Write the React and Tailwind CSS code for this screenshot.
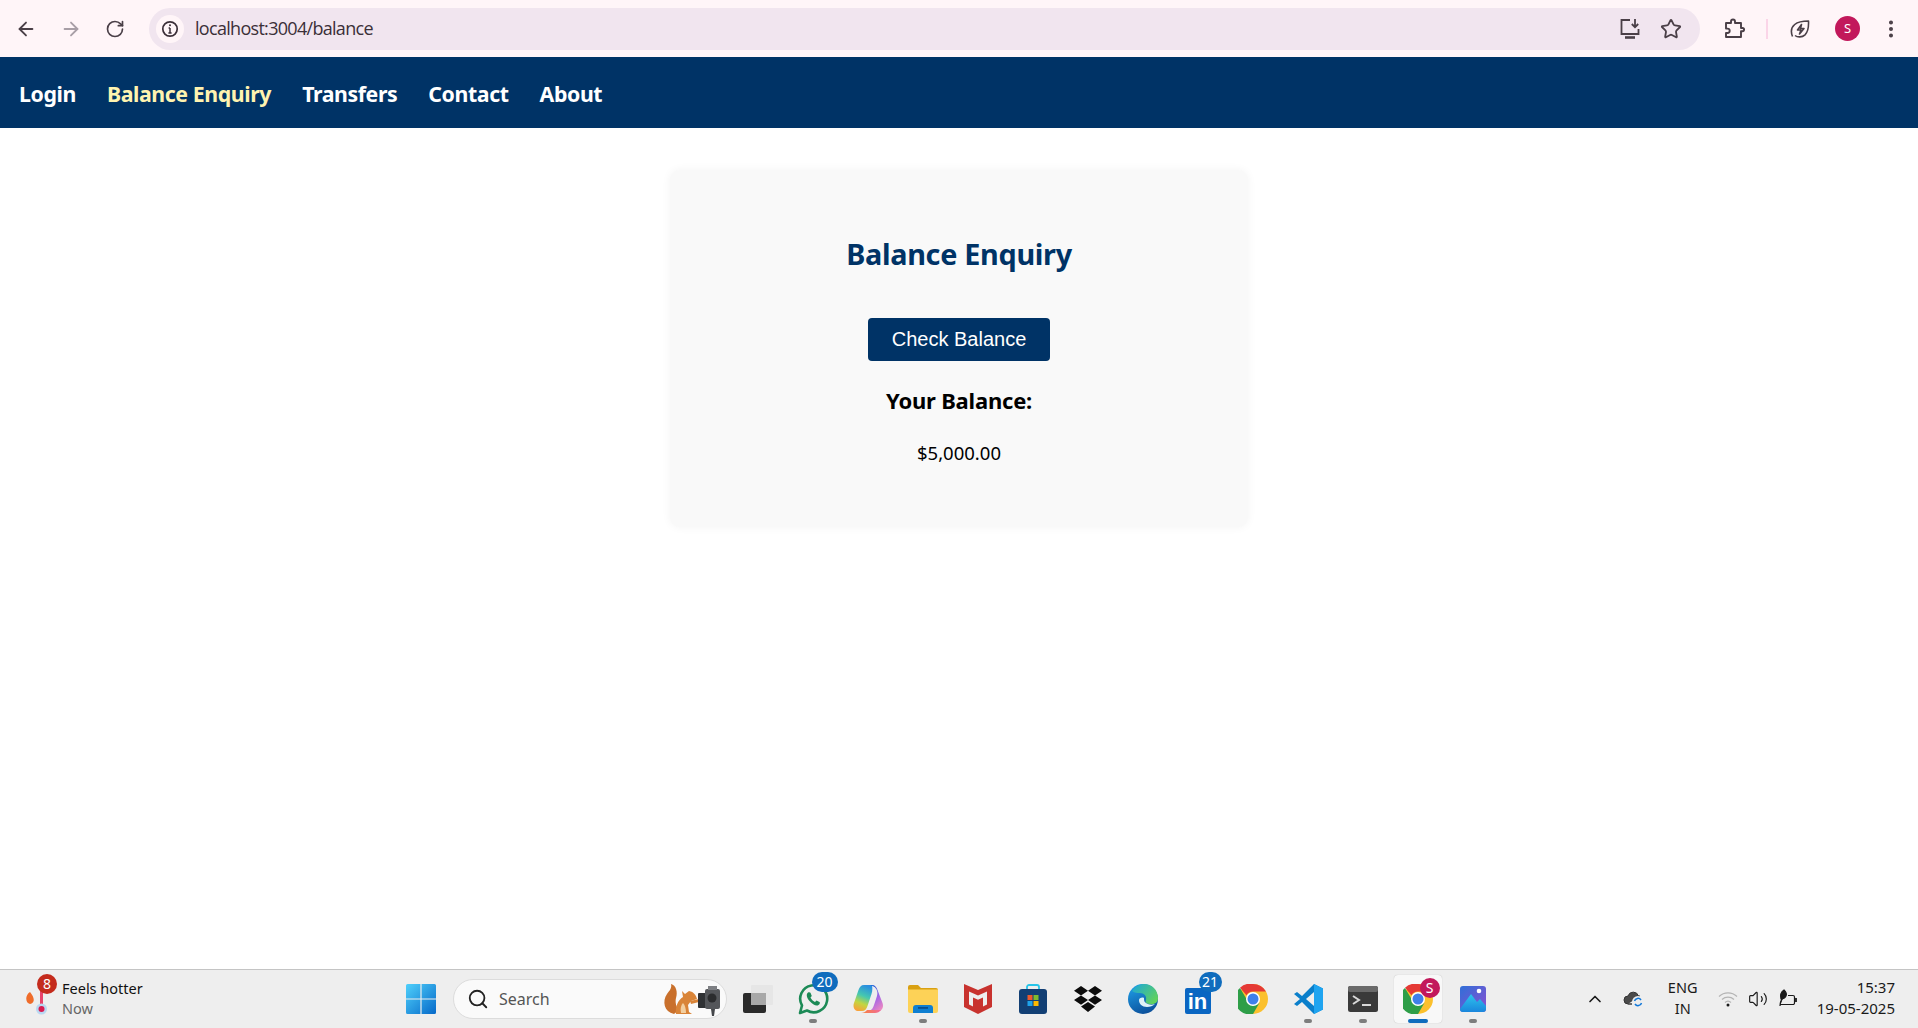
import { ArrowLeft, ArrowRight, RotateCw, Star, EllipsisVertical, ChevronUp, Volume2, Search } from "lucide-react";

const NAV = ["Login", "Balance Enquiry", "Transfers", "Contact", "About"];

function Info() {
  return (
    <svg width="18" height="18" viewBox="0 0 18 18" fill="none" stroke="#3b2f38" strokeWidth="1.7">
      <circle cx="9" cy="9" r="7.2" />
      <path d="M9 8v5M7.4 13h3.2M7.6 8H9" strokeWidth="1.5" />
      <circle cx="9" cy="5.3" r="1" fill="#3b2f38" stroke="none" />
    </svg>
  );
}

function InstallIcon() {
  return (
    <svg width="24" height="24" viewBox="0 0 24 24" fill="none" stroke="#4a3f47" strokeWidth="1.8">
      <path d="M12 3H3.500v14h17v-5" />
      <path d="M17 2v8M13.800 7l3.200 3.200L20.200 7" />
      <path d="M7 20.500h10" strokeWidth="2.600" />
    </svg>
  );
}

function PuzzleIcon() {
  return (
    <svg width="24" height="24" viewBox="0 0 24 24" fill="none" stroke="#4a3f47" strokeWidth="1.900" strokeLinejoin="round">
      <path d="M4 6h5V4.500a2 2 0 0 1 4 0V6h6v5h1.500a1.600 1.600 0 0 1 0 3.200H19V20H4v-4h1.500a2.200 2.200 0 0 0 0-4.400H4z" />
    </svg>
  );
}

function LeafBolt() {
  return (
    <svg width="22" height="22" viewBox="0 0 22 22" fill="none" stroke="#4a3f47" strokeWidth="1.600" strokeLinejoin="round">
      <path d="M3.500 18.500c-2-5-.8-9.500 2.200-12C8.700 4 14 3 19.500 3c.3 6-.6 11-3.500 13.800-3 2.700-7.500 2.700-10 .7" />
      <path d="M12.500 6.500 8.500 12h3.500l-1.500 4 4.500-5.500h-3.500z" />
    </svg>
  );
}

function WindowsLogo() {
  return (
    <svg width="30" height="30" viewBox="0 0 30 30">
      <defs>
        <linearGradient id="win" x1="0" y1="0" x2="1" y2="1">
          <stop offset="0" stopColor="#4fd0fb" />
          <stop offset="1" stopColor="#0669c9" />
        </linearGradient>
      </defs>
      <path d="M0 1.500A1.500 1.500 0 0 1 1.500 0h12.900v14.400H0zM15.600 0h12.900A1.500 1.500 0 0 1 30 1.500v12.900H15.600zM0 15.600h14.400V30H1.500A1.500 1.500 0 0 1 0 28.500zM15.600 15.600H30v12.900a1.500 1.500 0 0 1-1.500 1.500H15.600z" fill="url(#win)" />
    </svg>
  );
}

function Squirrel() {
  return (
    <svg width="64" height="36" viewBox="0 0 64 36">
      <path d="M12 33C2 31 0 20 5 13c3-4 5-6 4-10 5 1 7 8 5 14-1 4 0 9 3 12z" fill="#c9702c" />
      <path d="M14 33c-1-7 2-14 7-17l-1-6 3 3 4-3c5 1 7 4 8 8l-6 2-3 4 1 7 3 2h-9z" fill="#d98438" />
      <path d="M21 22c2 2 3 6 3 10h-5c-1-4 0-8 2-10z" fill="#f2cfa0" />
      <path d="M28 20l9-2v3l-8 2z" fill="#d98438" />
      <rect x="36" y="12" width="9" height="15" rx="1" fill="#2f3134" />
      <rect x="43" y="8" width="15" height="20" rx="2" fill="#54565a" />
      <rect x="46" y="5" width="9" height="4" fill="#7d7f83" />
      <circle cx="50" cy="17" r="4.500" fill="#2b2c2e" />
      <path d="M49 28h4l-1 7h-2z" fill="#45474a" />
    </svg>
  );
}

function TaskView() {
  return (
    <svg width="30" height="30" viewBox="0 0 30 30">
      <rect x="8" y="1" width="22" height="20" rx="1" fill="#e6e6e6" />
      <rect x="0" y="9" width="23" height="20" rx="2" fill="#2a2a2a" />
      <rect x="8" y="9" width="15" height="12" fill="#a8a8a8" />
    </svg>
  );
}

function WhatsApp() {
  return (
    <svg width="32" height="32" viewBox="0 0 32 32" fill="none">
      <path d="M3 30l2-7.500A13.500 13.500 0 1 1 10 27.500z" stroke="#1c8a56" strokeWidth="2.600" strokeLinejoin="round" />
      <path d="M11 9.500c-2 1.500-1.500 5 1.500 8.500s7 5.500 9 4c1.500-1 1.700-2.500 1-3l-3-1.500-1.500 1.500c-1.500-.5-4-3-4.500-4.500l1.300-1.500-1.300-3.200c-.5-.7-1.500-.8-2.500-.3z" fill="#1c8a56" />
    </svg>
  );
}

function Copilot() {
  return (
    <svg width="30" height="28" viewBox="0 0 30 28">
      <defs>
        <linearGradient id="cp1" x1="0.600" y1="0" x2="0.300" y2="1">
          <stop offset="0" stopColor="#2a8fe0" />
          <stop offset="0.4" stopColor="#45c8b0" />
          <stop offset="0.7" stopColor="#c3d640" />
          <stop offset="1" stopColor="#f9a13a" />
        </linearGradient>
        <linearGradient id="cp2" x1="0.300" y1="0" x2="0.800" y2="1">
          <stop offset="0" stopColor="#1d5fd8" />
          <stop offset="0.5" stopColor="#a566e6" />
          <stop offset="1" stopColor="#f08ac0" />
        </linearGradient>
        <linearGradient id="cp3" x1="0" y1="0" x2="1" y2="0">
          <stop offset="0" stopColor="#f9843a" />
          <stop offset="1" stopColor="#f06a9a" />
        </linearGradient>
      </defs>
      <path d="M19 0h-8C8 0 6.500 2 5.500 5L1 18c-1.500 4 .5 8 4.500 8H9c3 0 4.500-2 5.500-5l4-12c1-3 1-6 .5-9z" fill="url(#cp1)" />
      <path d="M17 0h2c3 0 4.500 2 5.500 5l5 13c1.500 4-.5 8-4.500 8h-9c3-1 4-3 5-6l3-9c1-4 .5-9-7-11z" fill="url(#cp2)" />
      <path d="M8 28h14c2.500 0 4.500-1 6-3H14c-1.500 2-3.500 3-6 3z" fill="url(#cp3)" />
    </svg>
  );
}

function Folder() {
  return (
    <svg width="30" height="28" viewBox="0 0 30 28">
      <path d="M0 2a2 2 0 0 1 2-2h8l3 3h15a2 2 0 0 1 2 2v5H0z" fill="#d9a012" />
      <path d="M0 4.500h30V26a2 2 0 0 1-2 2H2a2 2 0 0 1-2-2z" fill="#fdd257" />
      <path d="M5 28v-5a3 3 0 0 1 3-3h14a3 3 0 0 1 3 3v5z" fill="#0f7fd1" />
      <rect x="10" y="22" width="10" height="1.800" fill="#0a4f8f" />
    </svg>
  );
}

function McAfee() {
  return (
    <svg width="28" height="30" viewBox="0 0 28 30">
      <path d="M0 0l14 6 14-6v23l-14 7-14-7z" fill="#c8322e" />
      <path d="M5 7.500l9 4 9-4v13l-4 2v-9l-5 2.200-5-2.200v9l-4-2z" fill="#eeeeee" />
    </svg>
  );
}

function Store() {
  return (
    <svg width="30" height="30" viewBox="0 0 30 30">
      <path d="M9 6V3a2 2 0 0 1 2-2h8a2 2 0 0 1 2 2v3" fill="none" stroke="#27c4e8" strokeWidth="1.800" />
      <rect x="1" y="5" width="28" height="25" rx="3" fill="#123f74" />
      <rect x="9.500" y="11" width="5" height="5" fill="#ee5a2c" />
      <rect x="15.500" y="11" width="5" height="5" fill="#7fbb2e" />
      <rect x="9.500" y="17" width="5" height="5" fill="#1ea2ea" />
      <rect x="15.500" y="17" width="5" height="5" fill="#fdb900" />
    </svg>
  );
}

function Dropbox() {
  return (
    <svg width="30" height="27" viewBox="0 0 30 27" fill="#0b0b0b">
      <path d="M8 0l7 4.700L8 9.400 1 4.700zM22 0l7 4.700-7 4.700-7-4.700zM8 9.400l7 4.700-7 4.700-7-4.700zM22 9.400l7 4.700-7 4.700-7-4.700zM8 20.400l7-4.500 7 4.500-7 5.600z" />
    </svg>
  );
}

function Edge() {
  return (
    <svg width="30" height="30" viewBox="0 0 30 30">
      <defs>
        <linearGradient id="edg" x1="0.200" y1="0" x2="0.600" y2="1">
          <stop offset="0" stopColor="#1f9fe8" />
          <stop offset="1" stopColor="#0b4f9a" />
        </linearGradient>
        <linearGradient id="edg2" x1="0" y1="0" x2="1" y2="0.700">
          <stop offset="0" stopColor="#1aa6de" />
          <stop offset="1" stopColor="#62d25a" />
        </linearGradient>
      </defs>
      <circle cx="15" cy="15" r="15" fill="url(#edg)" />
      <path d="M4 7C7 2 12 0 16 0c8 0 14 6 14 14 0 5-4 7-9 6-3-.5-4-2-3-4 1-4-2-7-6-7-3 0-5 0-8-2z" fill="url(#edg2)" />
      <path d="M11 16c0 4 3 7 8 7 3 0 6-1 8-3-3 1-6 1-9-1-2-1-2-3-2-5-2-1-5 0-5 2z" fill="#dff2f7" />
    </svg>
  );
}

function LinkedIn() {
  return (
    <div className="w-[26px] h-[26px] mt-1 bg-[#0a66c2] rounded-[2px] flex items-end justify-center pb-[1px] text-white font-bold text-[22px] leading-none font-['Liberation_Sans',sans-serif]">
      in
    </div>
  );
}

function Chrome() {
  return (
    <svg width="30" height="30" viewBox="0 0 30 30">
      <circle cx="15" cy="15" r="15" fill="#fbc02d" />
      <path d="M15 0a15 15 0 0 1 13 7.500H15a7.500 7.500 0 0 0-6.500 3.750L2 3.700A15 15 0 0 1 15 0z" fill="#e53935" />
      <path d="M2.000 3.900A15 15 0 0 0 15 30l6.500-11.250a7.500 7.500 0 0 1-13-3.750z" fill="#2e9e48" />
      <circle cx="15" cy="15" r="7" fill="#fff" />
      <circle cx="15" cy="15" r="5.500" fill="#3f80ea" />
    </svg>
  );
}

function VSCode() {
  return (
    <svg width="30" height="30" viewBox="0 0 30 30">
      <path d="M21 0l9 4.500v21L21 30 9 18l-5 4-3-2 6-5-6-5 3-2 5 4z" fill="#0a7fcb" />
      <path d="M21 0l9 4.500v21L21 30z" fill="#1fa4f0" />
      <path d="M21 8l-8 7 8 7z" fill="#eeeeee" />
    </svg>
  );
}

function Terminal() {
  return (
    <svg width="30" height="26" viewBox="0 0 30 26">
      <rect width="30" height="26" rx="2.500" fill="#3a3a3a" />
      <rect width="30" height="6" rx="2" fill="#6a6a6a" />
      <path d="M5 10l6 4-6 4" fill="none" stroke="#d8d8d8" strokeWidth="2" />
      <path d="M14 19h9" stroke="#d8d8d8" strokeWidth="2" />
    </svg>
  );
}

function Photos() {
  return (
    <svg width="26" height="26" viewBox="0 0 26 26">
      <defs>
        <linearGradient id="ph" x1="0" y1="0" x2="1" y2="1">
          <stop offset="0" stopColor="#2f6fd8" />
          <stop offset="1" stopColor="#8d4fd0" />
        </linearGradient>
        <linearGradient id="ph2" x1="0" y1="0" x2="0" y2="1">
          <stop offset="0" stopColor="#2ec6ee" />
          <stop offset="1" stopColor="#1a86dc" />
        </linearGradient>
      </defs>
      <rect width="26" height="26" rx="3" fill="url(#ph)" />
      <path d="M0 23L11 8l6 8 3-3 6 7v3a3 3 0 0 1-3 3H3a3 3 0 0 1-3-3z" fill="url(#ph2)" />
      <circle cx="19" cy="5" r="2.300" fill="#fff" />
    </svg>
  );
}

function CloudSync() {
  return (
    <svg width="22" height="20" viewBox="0 0 22 20">
      <path d="M5 15a4 4 0 0 1 0-8 5.500 5.500 0 0 1 10.500 0H17" fill="#4a4a4a" stroke="#333" strokeWidth="1" />
      <path d="M5 15H9" stroke="#333" strokeWidth="1.400" fill="none" />
      <circle cx="15" cy="13" r="6" fill="#eeeeee" />
      <path d="M11.500 12a3.600 3.600 0 0 1 6.500-1M18.500 14a3.600 3.600 0 0 1-6.500 1" stroke="#1177d8" strokeWidth="1.500" fill="none" />
    </svg>
  );
}

function WifiIcon() {
  return (
    <svg width="20" height="16" viewBox="0 0 20 16" fill="none" stroke="#b4b4b4" strokeWidth="1.200">
      <path d="M1 5.500a13 13 0 0 1 18 0M4 8.500a9 9 0 0 1 12 0M7 11.500a4.500 4.500 0 0 1 6 0" />
      <circle cx="10" cy="14" r="1.500" fill="#1a1a1a" stroke="none" />
    </svg>
  );
}

function BatteryLeaf() {
  return (
    <svg width="22" height="20" viewBox="0 0 22 20" fill="none" stroke="#1a1a1a" strokeWidth="1.200">
      <path d="M3 15.500h13a1.500 1.500 0 0 0 1.500-1.500V8A1.500 1.500 0 0 0 16 6.500h-5" />
      <path d="M19 9v4" strokeWidth="1.800" />
      <path d="M7 1c2 2 3 4 2 6-1 2-3 3-5 3C3 6 4 3 7 1zM3 17c0-3 1-6 3-8" fill="#1a1a1a" />
    </svg>
  );
}

function Badge({ children, className }) {
  return (
    <span className={`absolute flex items-center justify-center rounded-full text-white text-[14px] leading-none ${className}`}>
      {children}
    </span>
  );
}

function TaskItem({ children, pip, active }) {
  return (
    <div className="w-[55px] h-[48px] shrink-0 flex justify-center">
      <div className={`relative w-[48px] h-[48px] flex items-center justify-center rounded-[4px] ${active ? "bg-[#f8f8f8] shadow-[0_0_1px_rgba(0,0,0,0.25)]" : ""}`}>
        {children}
        {pip && <span className="absolute bottom-0 left-1/2 -translate-x-1/2 w-2 h-[4px] rounded-full bg-[#7d7d7d]" />}
        {active && <span className="absolute bottom-0 left-1/2 -translate-x-1/2 w-5 h-[4px] rounded-full bg-[#0f6cbd]" />}
      </div>
    </div>
  );
}

export default function App() {
  return (
    <div className="w-full h-screen flex flex-col bg-white overflow-hidden font-['Noto_Sans',sans-serif]">
      {/* browser toolbar */}
      <div className="h-[57px] shrink-0 bg-[#fff5f8] flex items-center pl-[15px] pr-[13px]">
        <div className="flex items-center gap-[23px] text-[#4a3f47]">
          <ArrowLeft size={22} strokeWidth={2} />
          <ArrowRight size={22} strokeWidth={2} className="text-[#a89ea6]" />
          <RotateCw size={20} strokeWidth={2} />
        </div>
        <div className="ml-[24px] w-[1551px] h-[42px] rounded-full bg-[#f1e5ef] flex items-center pl-[7px] pr-[18px]">
          <div className="w-[28px] h-[28px] rounded-full bg-[#fff5f8] flex items-center justify-center">
            <Info />
          </div>
          <span className="ml-[11px] text-[18px] text-[#3b2f38] font-['Open_Sans',sans-serif] tracking-[-0.7px]">localhost:3004/balance</span>
          <div className="ml-auto flex items-center gap-[18px]">
            <InstallIcon />
            <Star size={22} strokeWidth={2} className="text-[#4a3f47]" />
          </div>
        </div>
        <div className="ml-[22px]"><PuzzleIcon /></div>
        <span className="ml-[20px] w-[2px] h-5 bg-[#fbd5e8]" />
        <div className="ml-[21px]"><LeafBolt /></div>
        <div className="ml-[24px] w-[25px] h-[25px] rounded-full bg-[#c2185b] text-white text-[13px] flex items-center justify-center">S</div>
        <EllipsisVertical size={22} strokeWidth={2.4} className="ml-[20px] text-[#4a3f47]" />
      </div>

      {/* nav */}
      <nav className="h-[71px] shrink-0 bg-[#003366] flex items-center pl-[19px] pt-[2px] gap-[31px] text-[21.3px] font-bold text-white tracking-[-0.4px]">
        {NAV.map((n) => (
          <span key={n} className={n === "Balance Enquiry" ? "text-[#fff3b0]" : ""}>{n}</span>
        ))}
      </nav>

      {/* page */}
      <main className="flex-1 min-h-0 flex justify-center items-start pt-[42px]">
        <div className="w-[578px] h-[357px] rounded-[10px] bg-[#f9f9f9] shadow-[0_0_10px_rgba(0,0,0,0.05)] flex flex-col items-center pt-[64px]">
          <h2 className="text-[28.8px] leading-[40px] font-bold text-[#003366] tracking-[-0.3px]">Balance Enquiry</h2>
          <button className="mt-[44px] w-[182px] h-[43px] pb-[2px] rounded-[4px] bg-[#003366] text-white text-[20px] font-['Liberation_Sans',sans-serif]">Check Balance</button>
          <h3 className="mt-[24px] text-[22px] leading-[30px] font-bold text-black tracking-[-0.2px]">Your Balance:</h3>
          <p className="mt-[26px] text-[18.5px] leading-[24px] text-black">$5,000.00</p>
        </div>
      </main>

      {/* taskbar */}
      <footer className="h-[59px] shrink-0 bg-[#eeeeee] border-t border-[#c4c4c4] flex items-center text-[#1a1a1a]">
        <div className="relative w-[400px] shrink-0 pl-[62px] pb-[3px] flex flex-col text-[14.5px] leading-[20px]">
          <span className="text-[#111]">Feels hotter</span>
          <span className="text-[#666]">Now</span>
          <svg className="absolute left-[24px] top-[4px]" width="24" height="34" viewBox="0 0 24 34">
            <path d="M6 10c-5 3-5 11 0 12 5-1 5-6 0-12z" fill="#ef6c2a" />
            <rect x="16" y="8" width="3" height="17" fill="#e8436b" />
            <circle cx="17.500" cy="27" r="5.500" fill="#b9d8f2" />
            <circle cx="17.500" cy="27" r="3" fill="#d81b50" />
          </svg>
          <Badge className="left-[37px] -top-[4px] w-5 h-5 bg-[#c42b1c]">8</Badge>
        </div>

        <div className="w-[44px] shrink-0 flex items-center justify-start pl-[6px]"><WindowsLogo /></div>
        <div className="ml-[9px] w-[274px] h-[40px] shrink-0 rounded-full bg-[#fafafa] border border-[#dcdcdc] flex items-center pl-[13px] overflow-hidden">
          <Search size={22} strokeWidth={2} className="text-[#222]" />
          <span className="ml-[10px] text-[16px] text-[#555]">Search</span>
          <div className="ml-auto"><Squirrel /></div>
        </div>

        <div className="ml-[3px] flex items-center">
          <TaskItem><TaskView /></TaskItem>
          <TaskItem pip>
            <WhatsApp />
            <Badge className="left-[23px] top-[-3px] w-[26px] h-[20px] bg-[#0f6cbd]">20</Badge>
          </TaskItem>
          <TaskItem><Copilot /></TaskItem>
          <TaskItem pip><Folder /></TaskItem>
          <TaskItem><McAfee /></TaskItem>
          <TaskItem><Store /></TaskItem>
          <TaskItem><Dropbox /></TaskItem>
          <TaskItem><Edge /></TaskItem>
          <TaskItem>
            <LinkedIn />
            <Badge className="left-[25px] top-[-3px] w-[23px] h-[20px] bg-[#0f6cbd]">21</Badge>
          </TaskItem>
          <TaskItem><Chrome /></TaskItem>
          <TaskItem pip><VSCode /></TaskItem>
          <TaskItem pip><Terminal /></TaskItem>
          <TaskItem active>
            <Chrome />
            <Badge className="left-[26px] top-[3px] w-[20px] h-[20px] bg-[#c2185b] text-[11px]">S</Badge>
          </TaskItem>
          <TaskItem pip><Photos /></TaskItem>
        </div>

        <div className="ml-auto flex items-center pr-[23px]">
          <ChevronUp size={20} strokeWidth={2} className="text-[#1a1a1a]" />
          <div className="ml-[18px]"><CloudSync /></div>
          <div className="ml-[18px] w-[40px] pb-[2px] text-center text-[14.5px] leading-[21px]">ENG<br />IN</div>
          <div className="ml-[15px]"><WifiIcon /></div>
          <Volume2 size={20} strokeWidth={1.4} className="ml-[10px] text-[#1a1a1a]" />
          <div className="ml-[9px]"><BatteryLeaf /></div>
          <div className="ml-[18px] pb-[2px] text-right text-[15px] leading-[21px]">15:37<br />19-05-2025</div>
        </div>
      </footer>
    </div>
  );
}
